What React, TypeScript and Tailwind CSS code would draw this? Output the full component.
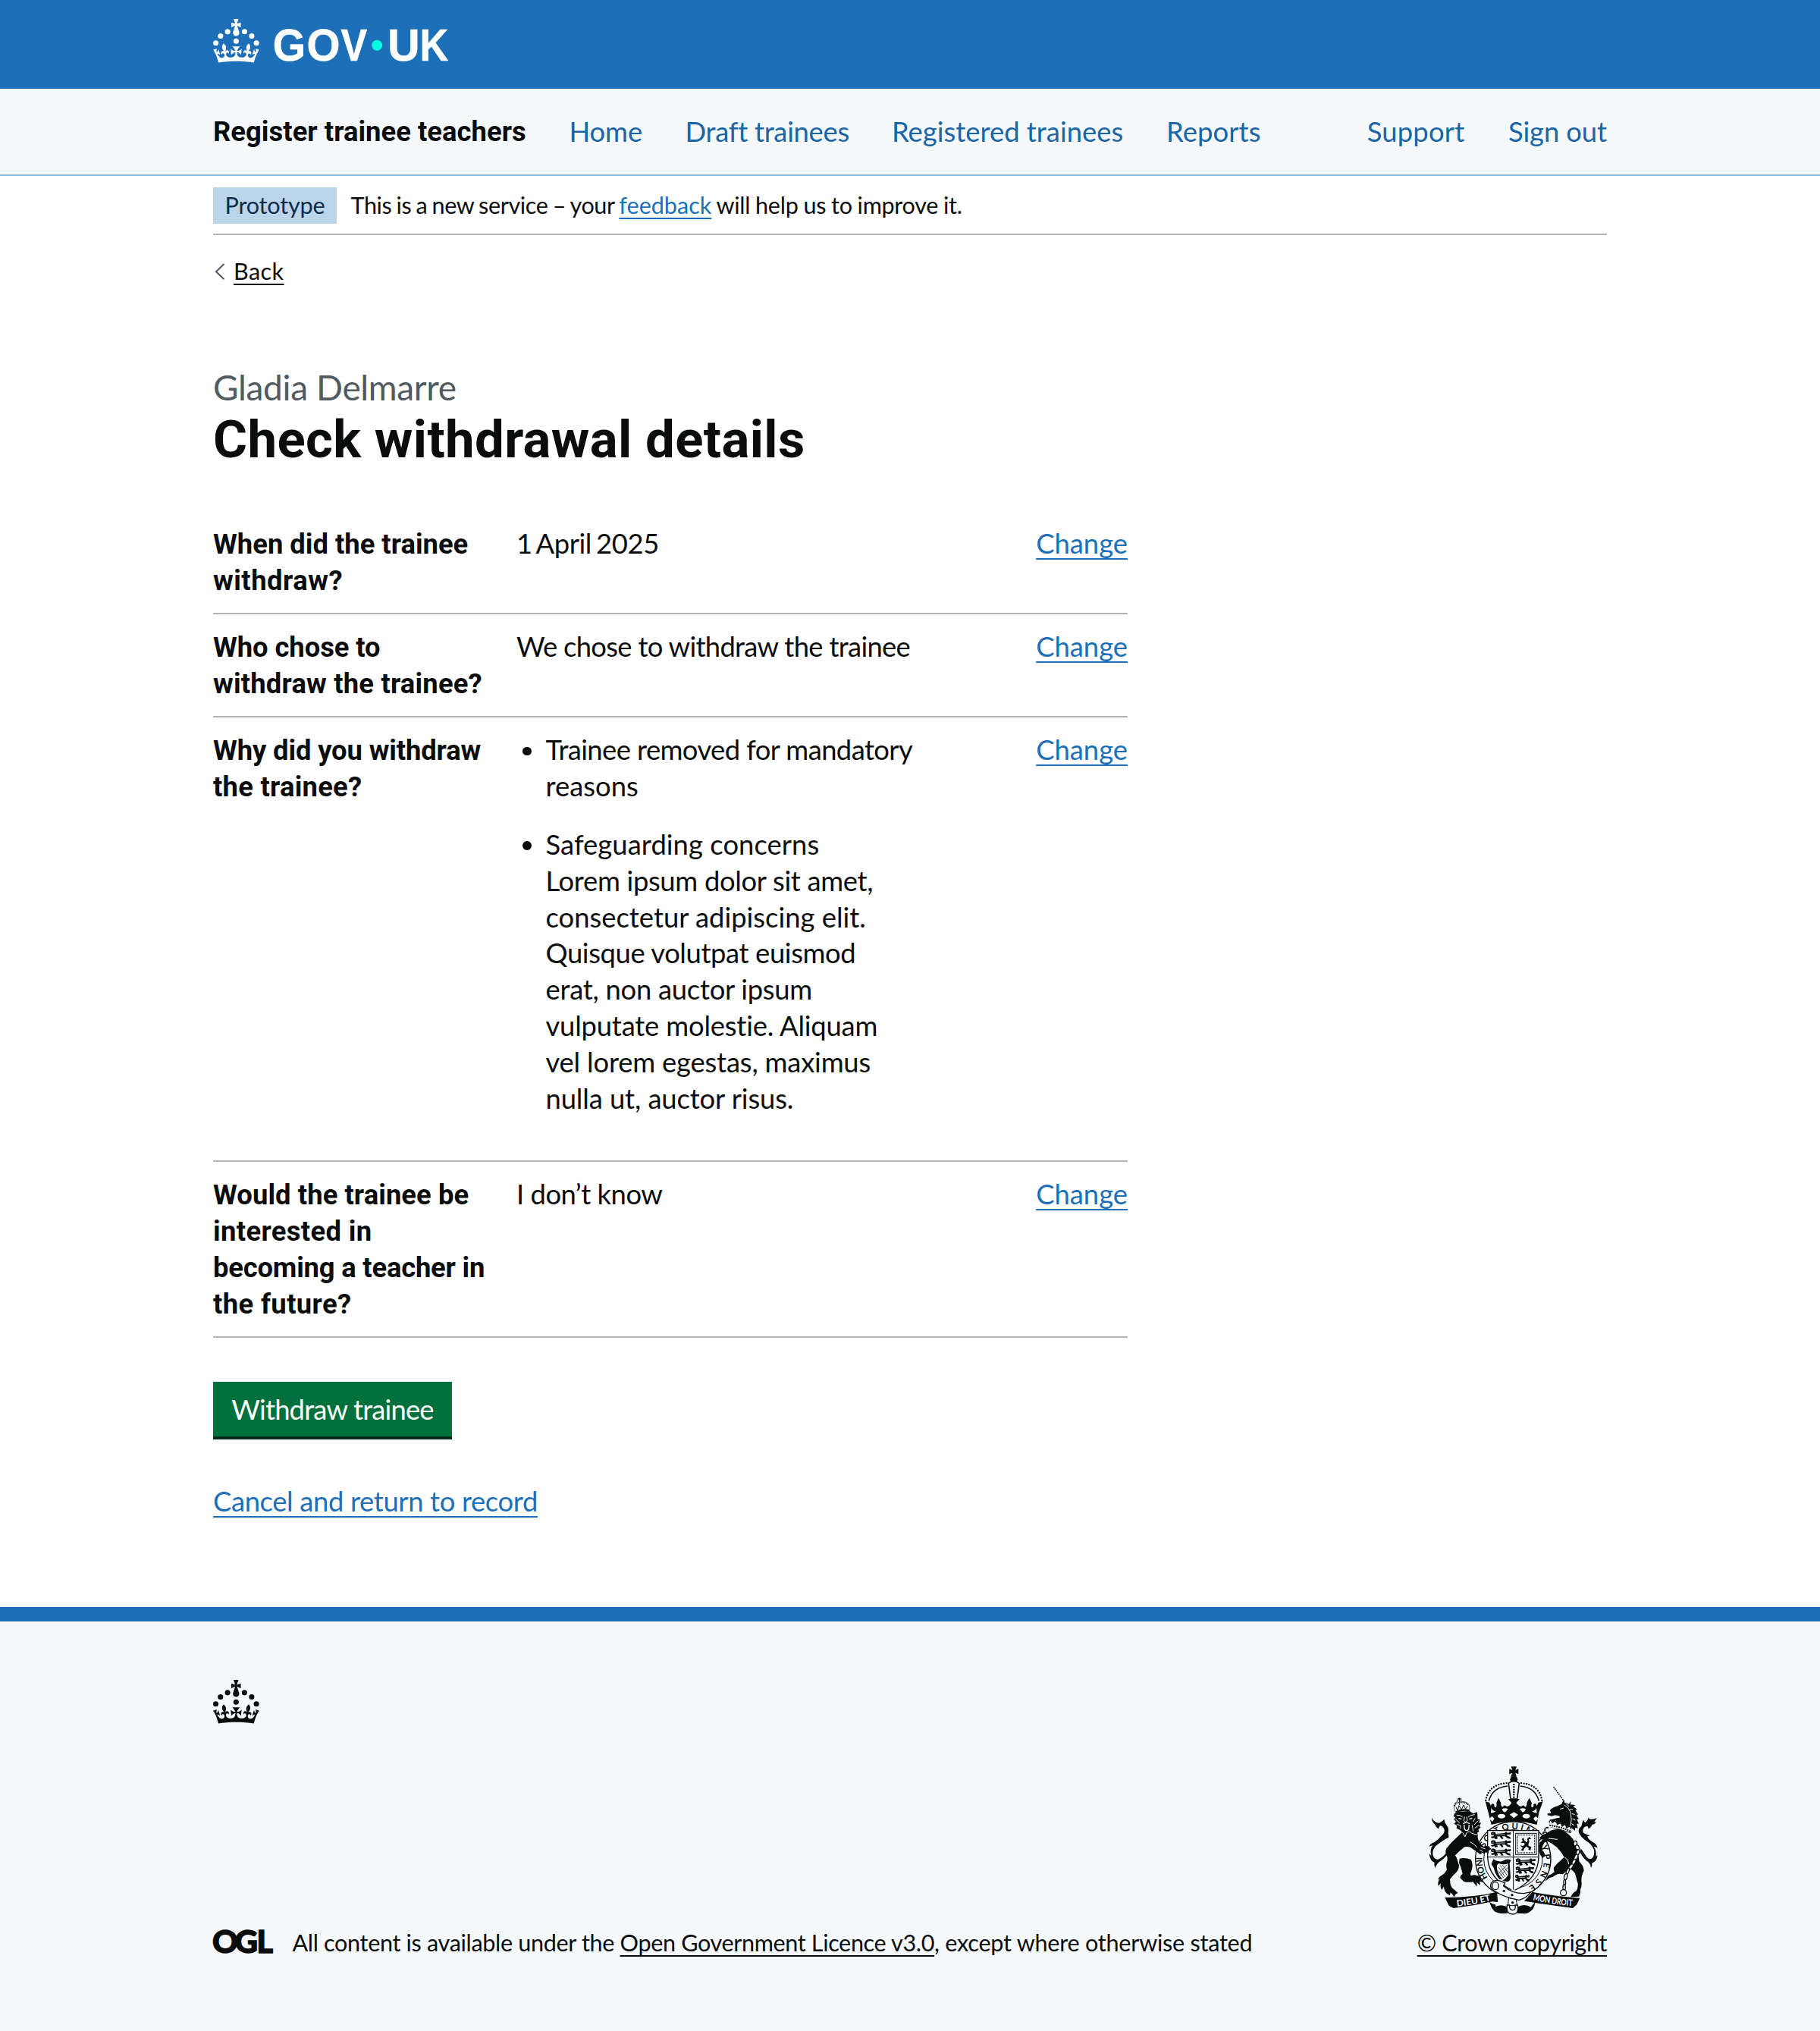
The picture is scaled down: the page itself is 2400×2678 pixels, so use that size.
import type { ReactNode } from 'react';

const regular = "font-['Lato','Noto_Sans',sans-serif] font-normal";
const strong = "font-['Roboto','Noto_Sans',sans-serif] font-bold";
const underlined = 'underline decoration-2 underline-offset-[6px] [text-decoration-skip-ink:none]';
const underlinedSmall = 'underline decoration-2 underline-offset-[5px] [text-decoration-skip-ink:none]';

function CrownShape() {
  return (
    <g>
      <circle cx="20" cy="17.6" r="3.7" />
      <circle cx="10.2" cy="23.5" r="3.7" />
      <circle cx="3.7" cy="33.2" r="3.7" />
      <circle cx="31.7" cy="30.6" r="3.7" />
      <circle cx="43.3" cy="17.6" r="3.7" />
      <circle cx="53.2" cy="23.5" r="3.7" />
      <circle cx="59.7" cy="33.2" r="3.7" />
      <path d="M33.1,9.8c.2-.1.3-.3.5-.5l4.6,2.4v-6.8l-4.6,1.5c-.1-.2-.3-.3-.5-.5l1.9-5.9h-6.7l1.9,5.9c-.2.1-.3.3-.5.5l-4.6-1.5v6.8l4.6-2.4c.1.2.3.3.5.5l-2.6,8c-.9,2.8,1.2,5.7,4.1,5.7h0c3,0,5.1-2.9,4.1-5.7l-2.6-8ZM37,37.9s-3.4,3.8-4.1,6.1c2.2,0,4.2-.5,6.4-2.8l-.7,8.5c-2-2.8-4.4-4.1-5.7-3.8.1,3.1.5,6.7,5.8,7.2,3.7.3,6.7-1.5,7-3.8.4-2.6-2-4.3-3.7-1.6-1.4-4.5,2.4-6.1,4.9-3.2-1.9-4.5-1.8-7.7,2.4-10.9,3,4,2.6,7.3-1.2,11.1,2.4-1.3,6.2,0,4,4.6-1.2-2.8-3.7-2.2-4.2.2-.3,1.7.7,3.7,3,4.2,1.9.3,4.7-.9,7-5.9-1.3,0-2.4.7-3.9,1.7l2.4-8c.6,2.3,1.4,3.7,2.2,4.5.6-1.6.5-2.8,0-5.3l5,1.8c-2.6,3.6-5.2,8.7-7.3,17.5-7.4-1.1-15.7-1.7-24.5-1.7h0c-8.8,0-17.1.6-24.5,1.7-2.1-8.9-4.7-13.9-7.3-17.5l5-1.8c-.5,2.5-.6,3.7,0,5.3.8-.8,1.6-2.3,2.2-4.5l2.4,8c-1.5-1-2.6-1.7-3.9-1.7,2.3,5,5.2,6.2,7,5.9,2.3-.4,3.3-2.4,3-4.2-.5-2.4-3-3.1-4.2-.2-2.2-4.6,1.6-6,4-4.6-3.7-3.7-4.2-7.1-1.2-11.1,4.2,3.2,4.3,6.4,2.4,10.9,2.5-2.8,6.3-1.3,4.9,3.2-1.8-2.7-4.1-1-3.7,1.6.3,2.3,3.3,4.1,7,3.8,5.4-.5,5.7-4.2,5.8-7.2-1.3-.2-3.7,1-5.7,3.8l-.7-8.5c2.2,2.3,4.2,2.7,6.4,2.8-.7-2.3-4.1-6.1-4.1-6.1h10.6,0Z" />
    </g>
  );
}

function GovUkLogo() {
  return (
    <svg viewBox="0 0 324 60" className="h-[57.4px] w-[310px] overflow-visible text-white" fill="currentColor" aria-label="GOV.UK">
      <CrownShape />
      <g className="stroke-current stroke-[0.6] font-['Liberation_Sans',sans-serif] text-[61.3px] font-bold">
        <text x="82.3" y="57.8" textLength="45.3" lengthAdjust="spacingAndGlyphs">G</text>
        <text x="129" y="57.8" textLength="46" lengthAdjust="spacingAndGlyphs">O</text>
        <text x="176.2" y="57.8" textLength="36.2" lengthAdjust="spacingAndGlyphs">V</text>
        <text x="240.7" y="57.8" textLength="44.3" lengthAdjust="spacingAndGlyphs">U</text>
        <text x="284.8" y="57.8" textLength="39.5" lengthAdjust="spacingAndGlyphs">K</text>
      </g>
      <circle cx="226" cy="36.3" r="7.3" fill="#00ffe0" />
    </svg>
  );
}

function Lion() {
  return (
    <g>
      {/* tail */}
      <path d="M82 256 Q92 276 112 277 Q126 270 131 262 Q132 274 140 284 Q152 300 147 318 Q151 326 148 336 Q138 338 128 346 Q112 356 98 368 Q84 382 86 402 Q92 424 108 421 Q130 412 146 386 L160 366 L166 372 Q146 406 122 424 Q100 436 96 455 Q90 442 93 434 Q74 426 72 398 L80 406 Q74 380 86 366 Q80 366 72 372 Q76 358 92 354 Q110 342 118 330 Q134 318 132 304 Q128 290 116 288 Q108 294 110 300 Q98 296 96 284 Q82 274 82 256Z" />
      {/* mane, body and limbs */}
      <path d="M172 240 L168 252 L176 254 L170 264 L178 272 L170 280 L182 288 L180 298 L196 306 L202 314 Q182 334 162 352 L140 378 Q134 392 140 404 Q146 414 144 424 Q136 444 142 462 Q132 480 122 484 Q110 488 106 502 L114 498 Q104 512 108 526 L118 516 Q114 532 122 542 L130 528 Q130 546 142 556 Q148 560 154 564 L156 552 Q166 560 170 570 L176 560 Q180 556 186 554 Q176 546 170 540 Q160 534 156 520 L154 500 Q164 486 178 474 Q190 462 190 444 Q184 420 176 404 L190 390 L212 372 Q232 368 244 380 L262 392 L274 402 L282 394 L290 400 L296 392 L306 398 L308 386 L318 380 L306 368 Q296 366 290 372 Q280 368 272 356 Q262 340 264 324 L262 316 L270 310 L266 304 L276 294 L270 290 L278 276 L270 278 L272 262 L264 262 L262 234 L246 240 L232 230 L190 232Z" />
      <path d="M192 418 Q214 412 238 422 Q248 444 238 470 Q232 480 238 486 Q252 480 262 486 L280 484 L272 494 Q284 498 286 512 L272 508 L274 524 L260 512 L262 528 Q250 520 246 510 Q222 514 208 508 L194 494 Q196 482 204 478 Q198 450 190 436Z" />
      {/* face */}
      <g className="fill-none stroke-[#f4f8fb] stroke-[3]">
        <path d="M180 246 Q194 244 204 254 M252 244 Q236 244 226 254 M212 252 L209 268 L215 274 L223 268 L220 252" />
        <path d="M188 258 L200 262 M242 258 L230 262" className="stroke-[4]" />
        <path d="M176 262 L192 276 M182 282 L196 288 L196 300 M254 258 L246 272 M266 268 L250 284 M268 286 L252 298 M242 286 L246 310" />
        <path d="M206 280 Q218 272 232 280 M210 284 L212 302 Q220 312 228 302 L230 284" className="stroke-[4]" />
        <path d="M204 314 L214 332 L220 316 Q230 306 240 318 L262 324" />
        <path d="M176 404 Q186 414 190 440 M234 352 Q250 360 262 374 M272 384 L284 390 M276 374 L294 380" />
      </g>
      {/* small crown */}
      <path d="M170 206 Q172 196 184 192 L182 186 L190 186 L188 179 L194 179 L192 186 L200 186 L196 193 Q222 190 230 206 Q234 216 230 232 Q204 222 178 238 Q168 222 170 206Z" className="fill-[#f4f8fb] stroke-current stroke-[2]" />
      <g className="fill-none stroke-current stroke-[5]">
        <path d="M172 210 Q178 196 190 196 M196 196 Q220 194 228 208" strokeDasharray="4 3" />
        <path d="M178 234 Q204 220 230 228" className="stroke-[7]" />
        <path d="M178 214 L184 228 L190 208 L200 224 L208 206 L216 222 L224 210 M184 182 H200 M192 178 V206" className="stroke-[3]" />
      </g>
    </g>
  );
}

function Unicorn() {
  return (
    <g>
      {/* horn */}
      <path d="M564 134 L606 192" fill="none" stroke="currentColor" strokeWidth="5" strokeDasharray="5 3.5" />
      {/* head and mane */}
      <path d="M604 184 L608 198 Q618 194 622 204 L634 192 L630 204 L650 206 L642 212 L658 224 L650 226 L662 244 L654 244 L664 262 L656 262 L664 280 L656 280 L660 298 L650 296 L648 308 L640 300 L632 318 Q604 308 580 302 L552 294 L546 270 L552 264 L562 262 Q574 258 588 256 L588 250 Q574 246 566 247 L556 250 L540 246 L540 240 L554 238 L550 226 Q560 216 580 210 L596 202Z" />
      <path d="M590 222 L604 218 M606 206 Q626 216 632 240 Q638 264 630 290 M612 200 L626 212 M640 224 L628 222 M648 244 L636 240 M650 266 L638 260 M646 286 L636 280" className="fill-none stroke-[#f4f8fb] stroke-[3]" />
      {/* coronet collar */}
      <path d="M550 262 L562 274 L572 266 L580 280 L592 274 L598 288 L610 280 L616 294 L628 288 L640 302 L632 314 Q590 300 548 292Z" className="fill-[#f4f8fb]" />
      <path d="M550 264 L560 276 L570 268 L580 282 L592 276 L598 290 L610 282 L616 296 L628 290 L634 302" className="fill-none stroke-current stroke-[4]" />
      <path d="M548 286 Q590 292 632 310" className="fill-none stroke-current stroke-[6]" strokeDasharray="6 3" />
      {/* body, forelegs and hind legs */}
      <path d="M536 318 Q558 300 588 302 Q620 312 640 340 Q652 360 656 384 Q664 404 666 430 Q684 446 684 466 Q674 484 674 506 Q678 524 670 540 Q672 556 664 568 L632 570 Q640 552 654 546 Q662 532 660 516 Q654 496 650 480 Q642 462 622 456 Q612 474 600 480 Q584 476 570 484 Q560 494 548 494 L530 508 L542 486 Q558 480 568 470 Q562 462 566 452 L580 436 L606 412 Q592 388 578 374 Q560 358 542 350 Q528 350 524 362 Q516 372 520 386 Q530 394 530 408 L520 416 Q508 402 506 386 Q504 356 520 342 L508 336 Q520 322 536 318Z" />
      <path d="M544 338 L580 342 M518 346 L510 352 M608 414 Q622 420 624 440" className="fill-none stroke-[#f4f8fb] stroke-[3]" />
      {/* chain links near the chest */}
      <path d="M544 296 Q532 292 530 304 Q528 314 538 316 M528 312 Q518 318 524 328" className="fill-none stroke-current stroke-[6]" strokeDasharray="10 3" />
      {/* tail */}
      <path d="M736 256 Q728 262 714 262 Q706 264 702 256 Q700 266 690 276 Q684 272 682 264 Q676 280 674 290 Q660 300 664 316 Q672 332 690 346 Q716 360 724 384 Q728 410 714 418 Q700 424 690 404 L672 378 L668 392 Q682 420 704 434 Q710 440 712 455 Q718 446 716 436 Q736 430 738 404 L732 410 Q734 386 724 372 Q732 370 738 376 Q734 358 718 352 Q700 342 698 330 L708 328 Q694 322 682 316 Q676 304 686 294 Q694 288 700 292 L702 300 Q714 294 716 284 Q730 282 732 272 L724 274Z" />
      {/* chain */}
      <g className="fill-[#f4f8fb] stroke-current stroke-[4]">
        <ellipse cx="650" cy="358" rx="7" ry="10" />
        <ellipse cx="658" cy="374" rx="7" ry="10" transform="rotate(-20 658 374)" />
        <ellipse cx="660" cy="393" rx="6" ry="11" transform="rotate(15 660 393)" />
        <ellipse cx="653" cy="412" rx="6" ry="12" transform="rotate(25 653 412)" />
        <ellipse cx="644" cy="432" rx="6" ry="12" transform="rotate(30 644 432)" />
        <ellipse cx="633" cy="450" rx="6" ry="12" transform="rotate(35 633 450)" />
        <ellipse cx="620" cy="468" rx="5" ry="12" transform="rotate(20 620 468)" />
        <ellipse cx="612" cy="490" rx="6" ry="12" transform="rotate(12 612 490)" />
        <ellipse cx="608" cy="512" rx="4" ry="11" />
        <ellipse cx="606" cy="532" rx="5" ry="11" />
        <circle cx="603" cy="553" r="12" />
      </g>
    </g>
  );
}

function Passant({ x, y, scale = 1 }: { x: number; y: number; scale?: number }) {
  return (
    <g transform={`translate(${x} ${y}) scale(${scale} 1)`}>
      <path d="M0 4 L8 0 L17 2 L20 8 L52 5 Q58 4 60 0 L66 4 L78 2 Q82 8 76 12 L66 10 L64 16 L76 20 L78 28 L66 26 L56 18 L44 18 L50 26 L44 29 L34 18 L24 19 L28 27 L16 29 L14 24 L4 26 L0 20 L10 18 L12 14 L2 14Z" />
      <path d="M20 12 L56 11 M6 8 L12 8 M34 22 L40 26" className="fill-none stroke-[#f4f8fb] stroke-[2]" />
    </g>
  );
}

const garterWords: { word: string; offset: number; length: number }[] = [
  { word: 'HONI', offset: 27, length: 85 },
  { word: 'SOIT', offset: 150, length: 92 },
  { word: 'QUI', offset: 251, length: 80 },
  { word: 'MAL', offset: 340, length: 78 },
  { word: 'Y', offset: 430, length: 20 },
  { word: 'PENSE', offset: 462, length: 150 },
];

function RoyalArms() {
  return (
    <svg viewBox="70 50 670 592" className="ml-[3px] h-[197.3px] w-[223.3px] text-[#0b0c0c]" fill="currentColor" aria-hidden="true">
      {/* imperial crown */}
      <path d="M396 54 H418 L413 68 L425 63 V84 L413 79 L418 94 H394 L401 79 L389 84 V63 L401 68Z" />
      <ellipse cx="407" cy="105" rx="15" ry="13" />
      <path d="M386 120 Q406 104 428 120 L420 182 H394Z" className="fill-[#f4f8fb] stroke-current stroke-[5]" />
      <path d="M407 122 V178" className="fill-none stroke-current stroke-[7]" strokeDasharray="6 4" />
      <path d="M296 188 Q306 124 382 119 M518 188 Q508 124 432 119" className="fill-none stroke-current stroke-[7] [stroke-dasharray:0.1_10.5] [stroke-linecap:round]" />
      <path d="M308 190 Q322 136 382 131 M506 190 Q492 136 432 131" className="fill-none stroke-current stroke-[5]" />
      <path d="M294 192 L310 196 L316 210 Q318 196 330 204 Q326 214 336 216 Q340 210 338 198 L346 178 L356 198 Q354 212 362 214 Q370 202 378 212 L388 210 L398 198 L384 182 H430 L416 198 L428 210 L436 212 Q444 202 452 214 Q460 212 458 198 L468 178 L478 198 Q474 210 478 216 Q488 214 484 204 Q496 196 498 210 L504 196 L522 192 L506 236 L498 284 Q406 258 318 284 L306 236Z" />
      <g className="fill-[#f4f8fb]">
        <path d="M318 216 Q320 230 336 230 Q328 238 316 238Z M360 222 Q372 216 384 222 L374 234 Q364 236 360 222Z M430 222 Q442 216 454 222 Q450 236 440 234Z M496 216 Q494 230 478 230 Q486 238 498 238Z" />
        <path d="M390 244 L407 234 L424 244 L407 258Z M310 260 L320 250 L330 260 L322 272Z M484 260 L494 250 L504 260 L494 272Z" />
        <ellipse cx="358" cy="250" rx="15" ry="9" />
        <ellipse cx="456" cy="250" rx="15" ry="9" />
      </g>

      {/* garter */}
      <ellipse cx="404" cy="420" rx="149" ry="148" className="fill-[#f4f8fb] stroke-current stroke-[4]" />
      <ellipse cx="404" cy="420" rx="116" ry="116" className="fill-none stroke-current stroke-[3]" />
      <path id="garter-text" d="M322 514 A122 122 0 1 1 445.7 538.3" fill="none" />
      {garterWords.map(({ word, offset, length }) => (
        <text key={word} className="font-['Lato',sans-serif] text-[34px] font-bold" textLength={length} lengthAdjust="spacing">
          <textPath href="#garter-text" startOffset={offset}>
            {word}
          </textPath>
        </text>
      ))}

      {/* quartered shield */}
      <path d="M303 307 H505 V412 Q503 500 405 546 Q307 500 303 412Z" className="fill-[#f4f8fb] stroke-current stroke-[4]" />
      <path d="M405 307 V546 M303 412 H505" className="fill-none stroke-current stroke-[3]" />
      <Passant x={316} y={312} />
      <Passant x={316} y={345} />
      <Passant x={316} y={378} />
      <rect x="414" y="318" width="82" height="84" className="fill-none stroke-current stroke-[3]" />
      <rect x="421" y="325" width="68" height="70" className="fill-none stroke-current stroke-[3]" strokeDasharray="8 3" />
      <path
        d="M438 340 L446 336 L448 346 L458 354 Q464 348 460 340 L468 332 L476 340 L466 342 L468 352 Q462 362 466 368 L476 372 L472 386 L464 382 L466 376 L456 370 L448 378 L444 388 L434 384 L442 376 L432 366 L444 368 L450 362 L448 356 L434 356 L442 348Z"
      />
      <Passant x={414} y={417} />
      <Passant x={414} y={449} scale={0.92} />
      <Passant x={412} y={481} scale={0.72} />
      <path d="M326 420 Q350 436 366 426 Q378 416 396 424 L390 436 L394 492 Q392 508 382 510 L362 506 Q374 498 384 484 L384 438 Q366 444 350 438 Q338 438 340 456 Q342 484 362 498 L350 500 Q332 480 328 456 L318 440Z" />
      <path d="M346 452 L372 490 M352 444 L380 484 M362 444 L384 474 M344 466 L366 494 M378 444 L346 478 M384 452 L354 486" className="fill-none stroke-current stroke-[2]" />

      <Lion />
      <Unicorn />

      {/* motto scroll */}
      <path d="M310 590 Q318 636 368 638 Q398 640 404 632 Q412 640 440 638 Q484 634 492 590 L470 560 L400 540 L330 560Z" className="fill-[#f4f8fb]" />
      <path d="M310 588 Q322 600 334 600 Q338 628 352 634 Q322 634 310 588Z M330 612 Q350 596 378 608 L382 634 Q350 638 340 630Z M492 588 Q488 628 452 636 L420 634 L424 608 Q452 596 474 610Z" />
      <path d="M134 572 Q250 572 340 550 L344 590 L322 588 Q246 606 168 614 L150 604Z" />
      <path d="M668 574 Q560 566 480 550 L448 586 L474 590 Q560 604 640 614 L656 600Z" />
      {/* garter strap and buckle */}
      <path d="M318 514 Q330 500 350 506 L372 514 L366 526 Q400 556 446 556 L474 550 Q458 574 428 582 Q372 574 330 546 Q308 534 318 514Z" className="fill-[#f4f8fb] stroke-current stroke-[4]" />
      <ellipse cx="334" cy="526" rx="13" ry="15" className="fill-none stroke-current stroke-[4]" />
      <path d="M386 574 L384 604 H420 L416 580Z" className="fill-[#f4f8fb] stroke-current stroke-[3]" />
      <path d="M380 602 Q376 638 402 638 Q428 638 422 602 L412 602 Q416 622 402 622 Q388 622 390 602Z" className="fill-[#f4f8fb] stroke-current stroke-[4]" />
      <circle cx="368" cy="546" r="5" />
      <circle cx="400" cy="562" r="5" />
      <circle cx="402" cy="592" r="5" />

      <g className="fill-[#f4f8fb] font-['Lato',sans-serif] text-[35px] font-bold">
        <path id="motto-left" d="M182 607 Q254 600 320 583" fill="none" />
        <text>
          <textPath href="#motto-left" textLength="136" lengthAdjust="spacingAndGlyphs">DIEU ET</textPath>
        </text>
        <path id="motto-right" d="M482 582 Q560 600 642 606" fill="none" />
        <text>
          <textPath href="#motto-right" textLength="158" lengthAdjust="spacingAndGlyphs">MON DROIT</textPath>
        </text>
      </g>
    </svg>
  );
}

function Line({ className = '', children }: { className?: string; children: ReactNode }) {
  return <span className={`block whitespace-nowrap ${className}`}>{children}</span>;
}

function Row({ height, label, children }: { height: string; label: ReactNode; children: ReactNode }) {
  return (
    <div className={`flex border-b-2 border-[#b1b4b6] ${height}`}>
      <dt className={`w-[400px] pt-[20px] ${strong}`}>{label}</dt>
      <dd className={`flex-1 pt-[19px] ${regular}`}>{children}</dd>
      <dd className={`pt-[19px] text-[#1d70b8] ${regular}`}>
        <a className={underlined}>Change</a>
      </dd>
    </div>
  );
}

function Bullet({ children }: { children: ReactNode }) {
  return (
    <li className="flex">
      <span className="mt-[19.5px] mr-[19px] ml-2 size-[11.5px] rounded-full bg-[#0b0c0c]" />
      <div>{children}</div>
    </li>
  );
}

export default function App() {
  return (
    <div className={`min-h-[2678px] w-[2400px] bg-white text-[36.4px] leading-[47.87px] text-[#0b0c0c] ${regular}`}>
      <header>
        <div className="h-[117px] bg-[#1d70b8] px-[281px] pt-[24.6px]">
          <GovUkLogo />
        </div>
        <nav className="flex h-[115px] items-center border-b-2 border-[#8eb8dc] bg-[#f4f8fb] px-[281px] text-[#1a65a6]">
          <span className={`w-[469.5px] pt-px tracking-[0.04px] text-[#0b0c0c] ${strong}`}>Register trainee teachers</span>
          <div className="flex flex-1 whitespace-nowrap">
            <a className="w-[153px] tracking-[-0.13px]">Home</a>
            <a className="w-[272.5px] tracking-[-0.29px]">Draft trainees</a>
            <a className="w-[362px]">Registered trainees</a>
            <a className="tracking-[0.09px]">Reports</a>
          </div>
          <div className="flex gap-[57.5px]">
            <a className="tracking-[0.2px]">Support</a>
            <a className="tracking-[-0.1px]">Sign out</a>
          </div>
        </nav>
      </header>

      <main className="px-[281px]">
        <div className="flex h-[78px] items-start border-b-2 border-[#b1b4b6] pt-[15px] text-[30.6px]">
          <strong className="flex h-12 w-[163px] items-center justify-center bg-[#bbd4ea] pb-px font-normal tracking-[-0.19px] text-[#0c2d4a]">
            Prototype
          </strong>
          <p className="ml-[18.5px] h-12 leading-[47px] whitespace-nowrap">
            <span className="tracking-[-0.38px] [word-spacing:-1.3px]">This is a new service – your </span>
            <a className={`tracking-[-0.03px] text-[#1d70b8] ${underlinedSmall}`}>feedback</a>
            <span className="tracking-[-0.3px] [word-spacing:-0.6px]"> will help us to improve it.</span>
          </p>
        </div>

        <div className="mt-[27px] flex h-[38px] items-center text-[30.6px] leading-[38px]">
          <svg viewBox="0 0 14 22" className="mt-[3px] ml-0.5 h-[22px] w-[14px] text-[#505a5f]" fill="none" stroke="currentColor" strokeWidth="2">
            <path d="M12.5 1 L2 11.2 L12.5 21.2" />
          </svg>
          <a className={`mt-1 ml-[11px] tracking-[0.4px] ${underlinedSmall}`}>Back</a>
        </div>

        <h1 className="mt-[107px]">
          <span className="block h-[58px] text-[46px] leading-[57.4px] tracking-[-0.35px] text-[#505a5f]">Gladia Delmarre</span>
          <span className={`mt-[3px] block h-[73px] text-[68.9px] leading-[73px] tracking-[0.36px] ${strong}`}>Check withdrawal details</span>
        </h1>

        <dl className="mt-[58px] w-[1206px]">
          <Row
            height="h-[136px]"
            label={
              <>
                <Line>When did the trainee</Line>
                <Line className="tracking-[0.5px]">withdraw?</Line>
              </>
            }
          >
            <Line className="tracking-[-0.38px] [word-spacing:-3px]">1 April 2025</Line>
          </Row>
          <Row
            height="h-[136px]"
            label={
              <>
                <Line className="tracking-[-0.08px]">Who chose to</Line>
                <Line className="tracking-[0.19px]">withdraw the trainee?</Line>
              </>
            }
          >
            <Line className="tracking-[-0.7px]">We chose to withdraw the trainee</Line>
          </Row>
          <Row
            height="h-[586px]"
            label={
              <>
                <Line className="tracking-[-0.13px]">Why did you withdraw</Line>
                <Line className="tracking-[0.25px]">the trainee?</Line>
              </>
            }
          >
            <ul className="flex flex-col gap-[29px]">
              <Bullet>
                <Line className="tracking-[-0.6px]">Trainee removed for mandatory</Line>
                <Line>reasons</Line>
              </Bullet>
              <Bullet>
                <Line className="tracking-[0.05px]">Safeguarding concerns</Line>
                <Line className="tracking-[-0.33px]">Lorem ipsum dolor sit amet,</Line>
                <Line>consectetur adipiscing elit.</Line>
                <Line className="tracking-[-0.4px]">Quisque volutpat euismod</Line>
                <Line className="tracking-[-0.27px]">erat, non auctor ipsum</Line>
                <Line className="tracking-[-0.2px]">vulputate molestie. Aliquam</Line>
                <Line className="tracking-[-0.2px]">vel lorem egestas, maximus</Line>
                <Line className="tracking-[-0.12px]">nulla ut, auctor risus.</Line>
              </Bullet>
            </ul>
          </Row>
          <Row
            height="h-[232px]"
            label={
              <>
                <Line className="tracking-[0.07px]">Would the trainee be</Line>
                <Line className="tracking-[0.35px]">interested in</Line>
                <Line className="tracking-[-0.2px]">becoming a teacher in</Line>
                <Line className="tracking-[0.39px]">the future?</Line>
              </>
            }
          >
            <Line className="tracking-[-0.48px]">I don’t know</Line>
          </Row>
        </dl>

        <button className="mt-[58px] flex h-[76px] w-[315px] items-center justify-center border-b-4 border-[#002d18] bg-[#00703c] pt-[2px] tracking-[-0.83px] text-white">
          Withdraw trainee
        </button>
        <p className="mt-[58px] h-[48px]">
          <a className={`tracking-[-0.37px] text-[#1d70b8] ${underlined}`}>Cancel and return to record</a>
        </p>
      </main>

      <footer className="mt-[115px] h-[559px] border-t-[19px] border-[#1d70b8] bg-[#f4f8fb] px-[281px] pt-[76.5px] text-[30.6px] leading-[38px]">
        <svg viewBox="0 0 64 60" className="h-[57.4px] w-[61.2px] overflow-visible" fill="currentColor" aria-hidden="true">
          <CrownShape />
        </svg>
        <div className="mt-[56px] flex items-end justify-between">
          <div className="flex items-end">
            <svg viewBox="0 0 79 31" className="mb-[5.5px] h-[31px] w-[79px] overflow-visible" fill="currentColor" aria-label="Open Government Licence">
              <g className="stroke-current stroke-[1.4] font-['Lato',sans-serif] text-[41px] font-black">
                <text x="-1" y="30.2" textLength="34" lengthAdjust="spacingAndGlyphs">O</text>
                <text x="28.5" y="30.2" textLength="30.5" lengthAdjust="spacingAndGlyphs">G</text>
                <text x="57.5" y="30.2" textLength="21.5" lengthAdjust="spacingAndGlyphs">L</text>
              </g>
            </svg>
            <p className="ml-[25.5px] whitespace-nowrap">
              <span className="tracking-[-0.34px]">All content is available under the </span>
              <a className={`tracking-[-0.37px] ${underlinedSmall}`}>Open Government Licence v3.0</a>
              <span className="tracking-[-0.25px]">, except where otherwise stated</span>
            </p>
          </div>
          <div className="flex flex-col items-center gap-[18px]">
            <RoyalArms />
            <a className={`tracking-[-0.37px] ${underlinedSmall}`}>© Crown copyright</a>
          </div>
        </div>
      </footer>
    </div>
  );
}
